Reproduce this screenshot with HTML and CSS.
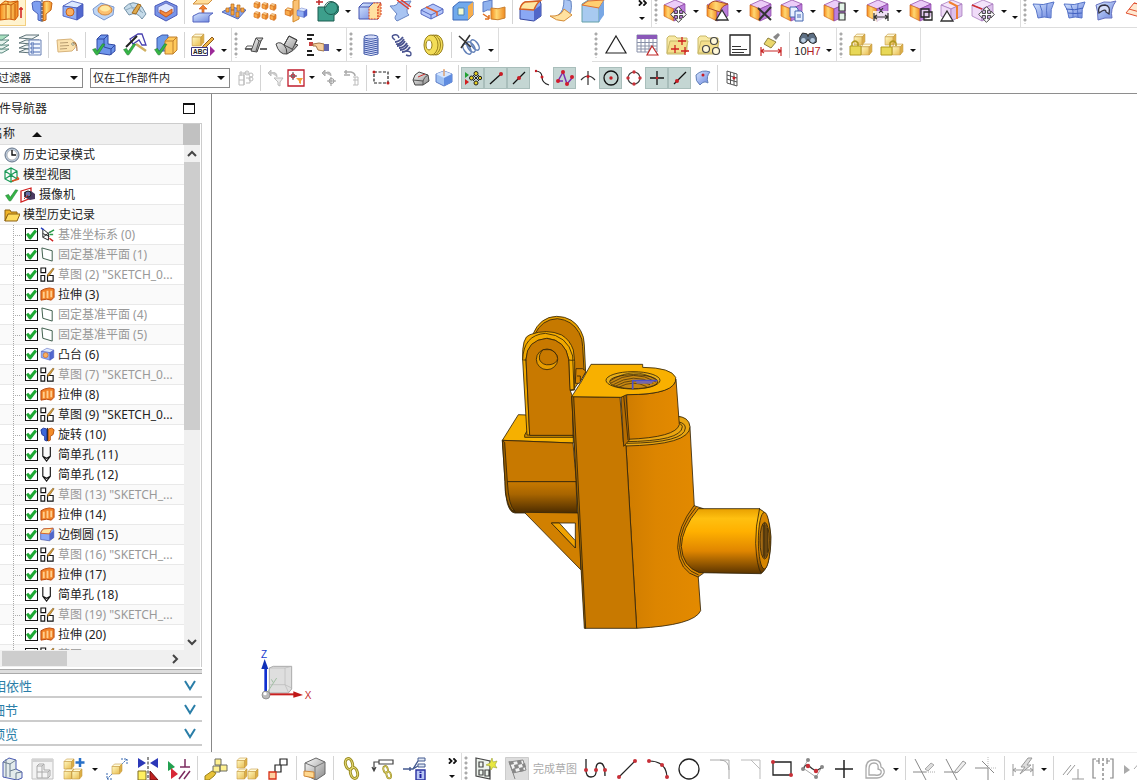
FILE: index.html
```html
<!DOCTYPE html>
<html lang="zh-CN">
<head>
<meta charset="utf-8">
<title>部件导航器</title>
<link rel="stylesheet" href="styles.css">
</head>
<body>
<svg class="sprite" aria-hidden="true">
<defs>
<linearGradient id="og" x2="1"><stop offset="0" stop-color="#f58a1c"/><stop offset=".4" stop-color="#ffd873"/><stop offset="1" stop-color="#f08a20"/></linearGradient>
<linearGradient id="bl" x2="1" y2="1"><stop offset="0" stop-color="#d8e8ff"/><stop offset="1" stop-color="#6680dc"/></linearGradient>
<linearGradient id="ye" x2="1" y2="1"><stop offset="0" stop-color="#fff8c0"/><stop offset="1" stop-color="#e8bc50"/></linearGradient>
<linearGradient id="gy" x2="1" y2="1"><stop offset="0" stop-color="#fff"/><stop offset="1" stop-color="#888"/></linearGradient>
<linearGradient id="mWall" x2="1"><stop offset="0" stop-color="#cf7c00"/><stop offset=".4" stop-color="#dc8500"/><stop offset="1" stop-color="#e38a00"/></linearGradient>
<linearGradient id="mPipe" x2="0" y2="1"><stop offset="0" stop-color="#e8a000"/><stop offset=".15" stop-color="#ffc010"/><stop offset=".35" stop-color="#ffb000"/><stop offset=".65" stop-color="#e08600"/><stop offset="1" stop-color="#5a3400"/></linearGradient>
<linearGradient id="mDark" x2="0" y2="1"><stop offset="0" stop-color="#c87900"/><stop offset=".4" stop-color="#a86500"/><stop offset="1" stop-color="#4c2c00"/></linearGradient>
</defs>
<symbol id="cubeB" viewBox="0 0 24 24"><g stroke="#4455b8" stroke-width=".8"><path d="M2 7l9-5 11 3-6 4z" fill="#dce9ff"/><path d="M2 7l14 2v12L2 17z" fill="#91aef4"/><path d="M16 9l6-4v12l-6 4z" fill="#5268cf"/></g></symbol>
<symbol id="cubeP" viewBox="0 0 24 24"><g stroke="#8a3fa0" stroke-width=".7"><path d="M1 6l11-5 10 4-11 5z" fill="#eccdf8"/><path d="M1 6l10 4v12L1 17z" fill="url(#og)" stroke="#d06a20"/><path d="M11 10l11-5v12l-11 5z" fill="#bb7fdc"/></g></symbol>
<symbol id="cubeL" viewBox="0 0 24 24"><g stroke="#a070b8" stroke-width=".7"><path d="M1 6l11-5 10 4-11 5z" fill="#f3e4fb"/><path d="M1 6l10 4v12L1 17z" fill="#f0dcf8"/><path d="M11 10l11-5v12l-11 5z" fill="#dcc0ec"/></g></symbol>
<symbol id="cubeY" viewBox="0 0 24 24"><g stroke="#c89c44" stroke-width="1.2" stroke-linejoin="round"><path d="M2 7l5-5h15l-5 5z" fill="#fffad8"/><path d="M2 7h15v15H2z" fill="url(#ye)"/><path d="M17 7l5-5v14l-5 6z" fill="#dcae44"/></g></symbol>
<symbol id="cubeO" viewBox="0 0 24 24"><g stroke="#d4701c" stroke-width="2" stroke-linejoin="round"><path d="M3 7l6-5 12 3-6 5z" fill="#ffe7a8"/><path d="M3 7l12 3v12L3 18z" fill="#f9ab4c"/><path d="M15 10l6-5v12l-6 5z" fill="#e98a30"/></g></symbol>
<symbol id="arrows" viewBox="0 0 24 24"><path d="M12 1l5 5h-3.500v4.500H18V7l5 5-5 5v-3.500h-4.500V18H17l-5 5-5-5h3.500v-4.500H6V17l-5-5 5-5v3.500h4.500V6H7z" fill="#fff" stroke="#333" stroke-width="1.300"/></symbol>
<symbol id="tick" viewBox="0 0 24 24"><path d="M1 13l5-2 3 5L18 3l4 1L10 22H7z" fill="#35b545" stroke="#1b7a2c"/></symbol>

<symbol id="extrude" viewBox="0 0 24 24"><path d="M1 6l5-4 5 1 8-1v15l-3 4-6-1-9 1z" fill="url(#og)" stroke="#d05a08"/><path d="M1 6l6-1 5 1 7-4M7 5v15M12 6v14M16 5v15M9 3v3" fill="none" stroke="#c45a08"/><path d="M22 19V8M20 10h4" stroke="#d02020" stroke-width="1.500"/></symbol>
<symbol id="revolve" viewBox="0 0 24 24"><path d="M11 3Q5 1 2 4l1 7 5 4v6l3 1z" fill="#7e9ff0" stroke="#4a62b8"/><path d="M13 3q6-2 9 1l-1 7-5 4v6l-3 1z" fill="url(#og)" stroke="#c86414"/><path d="M12 0v24" stroke="#303030" stroke-dasharray="3 1"/></symbol>
<symbol id="boss" viewBox="0 0 24 24"><use href="#cubeB"/><circle cx="9" cy="13" r="4" fill="#fbb060" stroke="#c8641c"/></symbol>
<symbol id="pad" viewBox="0 0 24 24"><path d="M1 10l8-6 13 4-1 8-9 5L2 15z" fill="#bfd6f4" stroke="#7a98d0"/><ellipse cx="13" cy="11" rx="7" ry="5" fill="#fbc070" stroke="#d58434"/><ellipse cx="13" cy="9.500" rx="5" ry="3" fill="#ffe9a0"/></symbol>
<symbol id="arcpad" viewBox="0 0 24 24"><path d="M1 9Q10-1 19 8l4 7-4 5q-5-8-13-4z" fill="#c6dbe9" stroke="#7492a8"/><path d="M7 5l6 9M14 4l4 9M3 11q9-6 17 3" fill="none" stroke="#8ca9bd"/><path d="M9 14l6-9 3 1-5 9z" fill="#e0ab4c" stroke="#a26a20"/></symbol>
<symbol id="shell" viewBox="0 0 24 24"><path d="M1 7l11-5 11 5v9l-11 6-11-6z" fill="#7895e8" stroke="#4a58b8"/><path d="M4 8l8-4 8 4v5l-8 5-8-5z" fill="#dfe8ff" stroke="#6a70c0"/><path d="M6 11l6 3 6-4v4l-6 4-6-4z" fill="#f58b3e" stroke="#c85a20"/></symbol>
<symbol id="offset" viewBox="0 0 24 24"><path d="M7 0h15l-5 5H2z" fill="#ffdc98" stroke="#d09040"/><path d="M12 6l4 4h-3v5h-2v-5H8z" fill="#f08030" stroke="#c85010" stroke-width=".6"/><path d="M2 17l6-3h14l-4 3v6H2z" fill="url(#bl)" stroke="#5465c0"/></symbol>
<symbol id="pattern" viewBox="0 0 24 24"><path d="M0 13l9-5 15 3-8 9z" fill="#86a5ee" stroke="#5468b8"/><g fill="#f7a843" stroke="#b86a1c" stroke-width=".7"><path d="M4 13V9h3v4zM9 11V5h3v6zM15 12V6h3v6zM9 16v-5h3v5zM14 18v-5h3v5zM19 13V9h3v4z"/></g></symbol>
<symbol id="cubes6" viewBox="0 0 24 24"><use href="#cubeO" x="0" y="2" width="8" height="8"/><use href="#cubeO" x="8" y="3" width="8" height="8"/><use href="#cubeO" x="16" y="4" width="8" height="8"/><use href="#cubeO" x="0" y="12" width="8" height="8"/><use href="#cubeO" x="8" y="13" width="8" height="8"/><use href="#cubeO" x="16" y="14" width="8" height="8"/></symbol>
<symbol id="mirror" viewBox="0 0 24 24"><path d="M9 2l6-2v20l-6 3z" fill="#fbc273" stroke="#d38a2c"/><use href="#cubeO" x="0" y="8" width="10" height="10"/><use href="#cubeB" x="12" y="8" width="12" height="12"/></symbol>
<symbol id="unite" viewBox="0 0 24 24"><path d="M4 0v6M1 3h7" stroke="#c02828" stroke-width="1.500"/><path d="M3 8h8a6.500 6.500 0 1 1 8 8v6H3z" fill="#3d9f8c" stroke="#1c5c50"/><circle cx="16" cy="9" r="6.500" fill="none" stroke="#1c5c50"/></symbol>
<symbol id="splitcube" viewBox="0 0 24 24"><path d="M1 8l4-4h18l-3 4v12H1z" fill="url(#bl)" stroke="#4455b0"/><path d="M11 8l4-4h8l-3 4v12h-9z" fill="#ffe0a0" stroke="#d84020" stroke-dasharray="2 1"/><path d="M20 8l3-4v12l-3 4z" fill="#f9b878" stroke="#d84020" stroke-dasharray="2 1"/><path d="M1 8h10l4-4" fill="none" stroke="#4455b0"/></symbol>
<symbol id="trim" viewBox="0 0 24 24"><path d="M1 7q8 0 8-4l13-1q-7 11-2 14l-12 6q-4-3 0-7z" fill="#a8c4f2" stroke="#6a86c4"/><path d="M8 1l12 9M11 0l11 8" stroke="#e04030" stroke-width="1.500"/></symbol>
<symbol id="slabs" viewBox="0 0 24 24"><path d="M1 11l12-6 10 5v4l-12 6L1 15z" fill="#b4c6fa" stroke="#5468c0"/><path d="M1 11l10 5 12-6M11 16v4" fill="none" stroke="#5468c0"/><path d="M6 8l11 5v4" fill="none" stroke="#e8602c" stroke-width="1.500"/></symbol>
<symbol id="ucut" viewBox="0 0 24 24"><path d="M2 8l6-5h14v13l-5 5H2z" fill="#70a9ec" stroke="#3c68b8"/><path d="M17 7l5-4v13l-5 5z" fill="#f6ad4c"/><path d="M7 16V9h6v7z" fill="#f3fbd0" stroke="#4d85b0"/></symbol>
<symbol id="wrapcopy" viewBox="0 0 24 24"><path d="M1 3l9-2v10q-5-1-9 2z" fill="#8fb2ee" stroke="#5878c4"/><path d="M9 9q7 2 14-1v11q-7 3-14 1z" fill="url(#og)" stroke="#c88030"/><path d="M1 15l6 4M7 20v-4m0 4H3" stroke="#e07020" stroke-width="1.500"/></symbol>
<symbol id="blend" viewBox="0 0 24 24"><path d="M1 10q1-5 5-7l15-1 1 3v12l-7 5-14-2z" fill="#8aa8f5" stroke="#3848a0"/><path d="M1 10q1-5 5-7l15-1q-4 3-6 9z" fill="#ffe6a0" stroke="#d96020" stroke-width="1.500"/><path d="M15 11l7-5v11l-7 5z" fill="#5066c8"/></symbol>
<symbol id="sweep" viewBox="0 0 24 24"><path d="M14 0l7 2q2 14-5 15l-8-1q6-3 6-16z" fill="#aac5f3" stroke="#6484c0"/><path d="M0 17q11 1 14-7l8 6-8 6q-8 0-14-5z" fill="#ffe1a0" stroke="#d48c38"/></symbol>
<symbol id="chamfer" viewBox="0 0 24 24"><path d="M1 5l8-5h14l-5 9v14H1z" fill="#a8caf0" stroke="#64a0a8"/><path d="M1 6l6-4 16-1-5 8z" fill="#ffcf70" stroke="#e07030"/><path d="M18 9l5-8v15l-5 7z" fill="#78a7e4"/></symbol>
<symbol id="fmove" viewBox="0 0 24 24"><use href="#cubeP"/><use href="#arrows" x="7" y="7" width="17" height="17"/></symbol>
<symbol id="fpull" viewBox="0 0 24 24"><use href="#cubeP"/><path d="M2 9q1-6 7-7l13 3q-7 2-8 8z" fill="url(#og)" stroke="#a84a30"/><path d="M16 11l6 10H10z" fill="#fff" stroke="#333" stroke-width="1.300"/></symbol>
<symbol id="fdel" viewBox="0 0 24 24"><use href="#cubeP"/><path d="M9 9l13 12M22 8L10 21" stroke="#333" stroke-width="2"/></symbol>
<symbol id="fcopy" viewBox="0 0 24 24"><use href="#cubeP"/><g fill="#e7f0ff" stroke="#4566b0"><path d="M10 8h6l2 2v8h-8z"/><path d="M15 12h6l2 2v8h-8zM17 16h4M17 18h4"/></g></symbol>
<symbol id="fgroup" viewBox="0 0 24 24"><use href="#cubeP"/><path d="M16 4h6v8h-6zM16 14h6v7h-6z" fill="#e4f4e8" stroke="#333" stroke-width="1.200"/></symbol>
<symbol id="fdim" viewBox="0 0 24 24"><use href="#cubeP"/><path d="M7 12h16v10H7z" fill="#fff" opacity=".75"/><path d="M8 14v8M22 14v8M8 18h14M11 16l-3 2 3 2M19 16l3 2-3 2M13 9l4 5M17 9l-4 5" fill="none" stroke="#333" stroke-width="1.200"/></symbol>
<symbol id="fframe" viewBox="0 0 24 24"><use href="#cubeP"/><path d="M12 10h8v8h-8zM15 13h8v8h-8z" fill="#fff" fill-opacity=".6" stroke="#222" stroke-width="1.300"/></symbol>
<symbol id="fshell" viewBox="0 0 24 24"><use href="#cubeL"/><path d="M9 3l8 4v13" fill="none" stroke="#f08030" stroke-width="2"/><path d="M7 12l6 10H1z" fill="#fff" stroke="#333" stroke-width="1.300"/></symbol>
<symbol id="fedge" viewBox="0 0 24 24"><use href="#cubeL"/><path d="M1 6l10 4" stroke="#d03030" stroke-width="1.500"/><use href="#arrows" x="7" y="7" width="17" height="17"/></symbol>
<symbol id="surf1" viewBox="0 0 24 24"><path d="M1 5q10 2 21-2-4 7-3 16-7-2-13 0Q5 10 1 5z" fill="url(#bl)" stroke="#5472c8"/><path d="M8 6q3 6 2 12M15 5q-1 6 0 13" fill="none" stroke="#5472c8"/></symbol>
<symbol id="surf2" viewBox="0 0 24 24"><use href="#surf1"/><path d="M3 10q9 2 17-1M5 14q7 1 14 0" fill="none" stroke="#4060c0"/></symbol>
<symbol id="surf3" viewBox="0 0 24 24"><path d="M2 6l8-3q7 1 12-1-6 8-4 17-7-1-14 2 0-9-2-15z" fill="url(#bl)" stroke="#6570c0"/><path d="M5 14q-2-8 6-8 6 1 4 9l-3-2q0-3-4-1z" fill="#d6defa" stroke="#334" stroke-width="1.300"/></symbol>
<symbol id="surf4" viewBox="0 0 24 24"><path d="M1 14l8-10 14 3-8 11z" fill="#ffe8d0" stroke="#e05030"/><path d="M4 10l14 4M9 4l8 2" stroke="#e05030"/></symbol>

<symbol id="layers" viewBox="0 0 24 24"><g fill="#e6f3ee" stroke="#5c8b80"><path d="M2 19l7-3h13l-7 4z"/><path d="M2 15l7-3h13l-7 4z"/><path d="M2 11l7-4h13l-7 5z"/><path d="M2 6l7-4h13l-7 5z" fill="#a8e0c0"/></g></symbol>
<symbol id="layerset" viewBox="0 0 24 24"><g fill="#f2f6f6" stroke="#5e7378"><path d="M1 19l7-3h13l-7 4z"/><path d="M1 15l7-3h13l-7 4z"/><path d="M1 10l7-3h13l-7 4z"/><path d="M1 5l7-3h13l-7 4z"/></g><path d="M11 7h12v15H11z" fill="#f2f7ff" stroke="#6880b4"/><path d="M13 10h3v2h-3zM13 14h3v2h-3zM13 18h3v2h-3zM17 11h5M17 15h5M17 19h5" stroke="#4868b0" fill="none"/></symbol>
<symbol id="tag" viewBox="0 0 24 24"><path d="M2 7l14-1 5 4-1 5-3 3-14 1z" fill="#fce2ae" stroke="#d8b47c"/><path d="M5 10l8-.5M5 13l9-.5M5 16l7-.5" stroke="#b89c70"/><circle cx="18" cy="11" r="1.300" fill="#fff" stroke="#997"/><path d="M18 10q4-2 4 8" fill="none" stroke="#a06838"/></symbol>
<symbol id="chkL" viewBox="0 0 24 24"><path d="M5 6l4-4h7v9l7 1v6l-5 4-13-2z" fill="#6d94ea" stroke="#3048a4"/><path d="M5 6h7v8l7 2 4-4M12 6l4-4M19 16v6" fill="none" stroke="#3048a4"/><use href="#tick" x="0" y="9" width="14" height="14"/></symbol>
<symbol id="chkT" viewBox="0 0 24 24"><path d="M7 6l8-5h4l4 11h-4l-3-5-6 4z" fill="#fff" stroke="#4840b0" stroke-width="1.300"/><path d="M3 14L14 3" stroke="#222" stroke-width="2"/><path d="M13 11l10 7" stroke="#d0b060" stroke-width="2.500"/><use href="#tick" x="0" y="9" width="14" height="14"/></symbol>
<symbol id="chkB" viewBox="0 0 24 24"><path d="M3 5l5-3h6v16H3z" fill="#6e9be8" stroke="#3c58ac"/><path d="M11 8l4-4h8v13l-4 4h-8z" fill="#ffc95c" stroke="#c0802c"/><path d="M11 8h8v13M19 8l4-4" fill="none" stroke="#c0802c"/><use href="#tick" x="0" y="9" width="14" height="14"/></symbol>
<symbol id="abc" viewBox="0 0 24 24"><use href="#cubeY" x="0" y="0" width="14" height="14"/><path d="M12 13l9-9 2 2-9 9-3 1z" fill="#f0b848" stroke="#8c5a20"/><path d="M.5 14.500h16v8H.5z" fill="#fff" stroke="#3b3580"/><text x="2" y="21" font-family="Liberation Sans, sans-serif" font-size="6.500" font-weight="700" fill="#222">ABC</text><path d="M19 13l5 5-5 5z" fill="#9c2a98"/></symbol>
<symbol id="weld1" viewBox="0 0 24 24"><path d="M1 16h7M16 16h7" stroke="#333" stroke-width="1.300"/><path d="M7 18l5-13h7l-2 3-4 11z" fill="url(#gy)" stroke="#444"/><path d="M12 5l3 3h2M15 8l-3 10M1 16l2-3h5" fill="none" stroke="#555"/></symbol>
<symbol id="weld2" viewBox="0 0 24 24"><path d="M1 11q3 11 11 10 7-3 11-9l-3-1 2-4-8-4-5 9-3-2q-3-1-5 1z" fill="url(#gy)" stroke="#444"/><path d="M9 12l5-9 8 4-5 10M9 12q3 3 3 9M9 12l8 4" fill="none" stroke="#444"/></symbol>
<symbol id="pick" viewBox="0 0 24 24"><path d="M1 2h7M1 6h5M1 18h5M1 22h7" stroke="#222" stroke-width="1.800"/><path d="M3 9h4v4H3z" fill="#c84040"/><path d="M7 11l6-1 5 1v7l-6-1-2-4H7z" fill="#f7cf9c" stroke="#a37648"/><path d="M18 11h5v7h-5z" fill="#6266ac"/></symbol>
<symbol id="coil" viewBox="0 0 24 24"><path d="M5 3h14v18H5z" fill="#d6defa"/><g fill="none" stroke="#4058a8"><ellipse cx="12" cy="4" rx="7" ry="2"/><path d="M5 5v16M19 5v16M5 7q7 3 14 0M5 9q7 3 14 0M5 11q7 3 14 0M5 13q7 3 14 0M5 15q7 3 14 0M5 17q7 3 14 0M5 19q7 3 14 0M5 21q7 3 14 0"/></g></symbol>
<symbol id="spring" viewBox="0 0 24 24"><g fill="none" stroke="#4a5490" stroke-width="1.400"><path d="M9 5Q8 1 4 2t1 5M16 18q5 0 5 3t-5 1"/><path d="M5 9q4 0 8-5M6 11q4 1 8-5M7 13q5 0 8-5M9 15q5 0 8-5M10 17q5 0 8-5M12 19q5 0 8-5" stroke-width="1.800"/></g></symbol>
<symbol id="rings" viewBox="0 0 24 24"><g stroke="#98801c" fill="#f3dd58"><ellipse cx="15" cy="12" rx="7" ry="10"/><ellipse cx="12.500" cy="12" rx="7" ry="10"/><ellipse cx="10" cy="12" rx="7" ry="10"/><ellipse cx="8" cy="12" rx="3" ry="5" fill="#fff"/></g></symbol>
<symbol id="cutspring" viewBox="0 0 24 24"><g fill="none" stroke="#6280b8" stroke-width="1.500"><ellipse cx="9" cy="16" rx="3" ry="6" transform="rotate(-35 9 16)"/><ellipse cx="13" cy="14" rx="3" ry="6" transform="rotate(-35 13 14)"/><ellipse cx="17" cy="12" rx="3" ry="6" transform="rotate(-35 17 12)"/></g><path d="M1 3l12 11M12 2L3 15" stroke="#333" stroke-width="1.600"/></symbol>
<symbol id="tri" viewBox="0 0 24 24"><path d="M12 3l10 17H2z" fill="none" stroke="#222" stroke-width="1.200"/></symbol>
<symbol id="table" viewBox="0 0 24 24"><path d="M2 2h20v17H2z" fill="#fff" stroke="#8890a8"/><path d="M2 2h20v4H2z" fill="#8a58b8"/><path d="M2 9.500h20M2 13h20M2 16h20M6 6v13M10 6v13M14 6v13M18 6v13" stroke="#8890a8"/><path d="M17 13l6 9H12z" fill="#fff" stroke="#c02828" stroke-width="1.200"/></symbol>
<symbol id="folder" viewBox="0 0 24 24"><path d="M1 5l2-2h6l2 2h10v13l-3 3H1z" fill="#f8e9a4" stroke="#c8b868"/><path d="M4 8h18l-3 12H1z" fill="#f4df8c" stroke="#c8b868"/></symbol>
<symbol id="folderplus" viewBox="0 0 24 24"><use href="#folder"/><path d="M16 4v8M12 8h8M9 12v8M5 16h8M19 14v8M15 18h8" stroke="#d02020" stroke-width="1.300"/></symbol>
<symbol id="folderrings" viewBox="0 0 24 24"><use href="#folder"/><g fill="#fff8d8" stroke="#444" stroke-width="1.200"><circle cx="17" cy="8" r="3.500"/><circle cx="9" cy="16" r="3.500"/><circle cx="19" cy="18" r="3.500"/></g></symbol>
<symbol id="note" viewBox="0 0 24 24"><path d="M2 2h20v20H2z" fill="#fff" stroke="#222" stroke-width="1.300"/><path d="M4 13.500h9M4 16.500h15M4 19.500h12" stroke="#333"/></symbol>
<symbol id="brush" viewBox="0 0 24 24"><path d="M14 4l5-4 2 2-4 5z" fill="#888"/><path d="M9 5l8 4-5 6-7-4z" fill="#ead76c" stroke="#8c8040"/><path d="M2 14v9M22 14v9M2 18h20M5 16l-3 2 3 2M19 16l3 2-3 2" fill="none" stroke="#c82828" stroke-width="1.200"/></symbol>
<symbol id="binoc" viewBox="0 0 24 14"><path d="M3 6l3-5 5 1 1 3 1-3 5-1 3 5v5q-3 3-7 0l-2-3-2 3q-4 3-7 0z" fill="#5d6f84" stroke="#222"/><circle cx="7" cy="9" r="2.500" fill="#b8cce0"/><circle cx="17" cy="9" r="2.500" fill="#b8cce0"/></symbol>
<symbol id="lock1" viewBox="0 0 24 24"><use href="#cubeY" x="4" y="0" width="13" height="13"/><use href="#cubeY" x="11" y="10" width="13" height="13"/><path d="M1 13h11v9H1z" fill="#e8d858" stroke="#b0981c"/><path d="M3 13v-3q3-4 6 0v3" fill="none" stroke="#b0981c" stroke-width="1.500"/></symbol>
<symbol id="lock2" viewBox="0 0 24 24"><use href="#cubeY" x="4" y="0" width="13" height="13"/><use href="#cubeY" x="11" y="10" width="13" height="13"/><path d="M1 14h11v8H1z" fill="#e8d858" stroke="#b0981c"/><path d="M10 14v-4q3-4 6 0v3" fill="none" stroke="#b0981c" stroke-width="1.500"/></symbol>

<symbol id="selbody" viewBox="0 0 18 18"><g fill="none" stroke="#bbb"><path d="M2 6h5v10H2zM2 11h5M7 4v12M4 2v5M2 4h9M9 9h4v5H9"/><circle cx="10" cy="4" r="2"/><circle cx="14" cy="6" r="2"/><circle cx="14" cy="10" r="2"/></g></symbol>
<symbol id="undo" viewBox="0 0 18 18"><path d="M2 4l3-3v6zM5 4q6-2 6 4" fill="#ccc" stroke="#bbb"/><path d="M8 9h9l-3 4v4l-2-1v-3z" fill="#eee" stroke="#bbb"/></symbol>
<symbol id="filter" viewBox="0 0 18 18"><path d="M1 1h16v16H1z" fill="#fff" stroke="#c01c2c" stroke-width="1.300"/><path d="M6 3v8M2 7h8" stroke="#444"/><circle cx="6" cy="7" r="2" fill="none" stroke="#c01c2c"/><path d="M9 9h7l-2 3v3l-2-1v-2z" fill="#f3a13c"/></symbol>
<symbol id="swap" viewBox="0 0 18 18"><path d="M2 4l3-3v6zM5 4q6-3 6 3" fill="#bbb" stroke="#aaa"/><path d="M11 8v9M7 12h9" stroke="#999"/><circle cx="11.500" cy="12" r="2.500" fill="none" stroke="#999"/></symbol>
<symbol id="swap2" viewBox="0 0 18 18"><path d="M1 3h7q4 1 4 4M1 6h6M3 1v4" fill="none" stroke="#aaa" stroke-width="1.500"/><path d="M10 8h5v8h-5M10 11h5M12 8v8" fill="none" stroke="#bbb"/></symbol>
<symbol id="rectsel" viewBox="0 0 18 18"><path d="M2 3h14v11H2z" fill="none" stroke="#222" stroke-width="1.200" stroke-dasharray="3 1.500"/><circle cx="2" cy="3" r="1.500" fill="#c02020"/><circle cx="16" cy="14" r="1.500" fill="#c02020"/></symbol>
<symbol id="rib" viewBox="0 0 18 18"><path d="M1 11q1-6 6-8l9 3 1 6-6 4H3z" fill="url(#gy)" stroke="#444"/><path d="M1 11l10 1q1-4 5-6M11 12v4" fill="none" stroke="#555"/><path d="M6 8l7-3" fill="none" stroke="#d03030"/></symbol>
<symbol id="bcube" viewBox="0 0 18 18"><path d="M1 5l8-3 8 3v8l-8 4-8-4z" fill="#9ec0f2" stroke="#5c7cc8"/><path d="M1 5l8 4 8-4-8-3z" fill="#d5e6ff"/><path d="M9 9l8-4v8l-8 4z" fill="#5f8ce0"/><path d="M9 0v7" stroke="#e08030"/></symbol>
<symbol id="snap" viewBox="0 0 18 18"><path d="M1 3l4 3-4 3z" fill="#1fa030"/><path d="M1 10l4 3-4 3z" fill="#d02020"/><g fill="#e8d020" stroke="#222"><circle cx="12" cy="4.500" r="2"/><circle cx="12" cy="14" r="2"/><circle cx="7.500" cy="9" r="2"/><circle cx="16" cy="9" r="1.700"/></g><path d="M9 6l6 6M15 6l-6 6" stroke="#222"/></symbol>
<symbol id="endpt" viewBox="0 0 18 18"><path d="M3 15L14 5" stroke="#111" stroke-width="1.300"/><circle cx="14" cy="5" r="2" fill="#c81c24"/></symbol>
<symbol id="midpt" viewBox="0 0 18 18"><path d="M3 15L15 3" stroke="#111" stroke-width="1.300"/><circle cx="9" cy="9" r="2" fill="#c81c24"/></symbol>
<symbol id="ctrlpt" viewBox="0 0 18 18"><path d="M2 2q7 0 7 6t7 8" fill="none" stroke="#222" stroke-width="1.200"/><circle cx="9" cy="8" r="1.500" fill="#c81c24"/><circle cx="3" cy="2" r="1.200" fill="#c81c24"/></symbol>
<symbol id="pole" viewBox="0 0 18 18"><path d="M2 12L7 3l4 12 5-6M2 12h5" fill="none" stroke="#7a30b0" stroke-width="1.500"/><g fill="#d01c2c"><circle cx="2" cy="12" r="2"/><circle cx="7" cy="3" r="2"/><circle cx="11" cy="15" r="2"/><circle cx="16" cy="8" r="2"/></g></symbol>
<symbol id="inter" viewBox="0 0 18 18"><path d="M9 2v14M2 11q7-8 14 0" fill="none" stroke="#333" stroke-width="1.200"/><circle cx="9" cy="7.500" r="1.500" fill="#c81c24"/></symbol>
<symbol id="center" viewBox="0 0 18 18"><circle cx="9" cy="9" r="7" fill="none" stroke="#111" stroke-width="1.300"/><circle cx="9" cy="9" r="1.700" fill="#c81c24"/></symbol>
<symbol id="quad" viewBox="0 0 18 18"><circle cx="9" cy="9" r="6" fill="none" stroke="#444" stroke-width="1.200"/><g fill="#c83038"><circle cx="9" cy="3" r="1.700"/><circle cx="9" cy="15" r="1.700"/><circle cx="3" cy="9" r="1.700"/><circle cx="15" cy="9" r="1.700"/></g></symbol>
<symbol id="existpt" viewBox="0 0 18 18"><path d="M9 2v14M2 9h14" stroke="#111" stroke-width="1.300"/><circle cx="9" cy="9" r="1.300" fill="#c81c24"/></symbol>
<symbol id="oncurve" viewBox="0 0 18 18"><path d="M3 15L15 3" stroke="#111" stroke-width="1.300"/><circle cx="6" cy="12" r="2" fill="#c81c24"/></symbol>
<symbol id="onface" viewBox="0 0 18 18"><path d="M2 6q6-6 14-3-4 4-2 11-4-3-8 2-5-4-4-10z" fill="url(#bl)" stroke="#6482b8"/><circle cx="9" cy="6" r="1.500" fill="#c81c24"/></symbol>
<symbol id="gridpt" viewBox="0 0 18 18"><path d="M4 2l10 3v12L4 14zM4 6l10 3M4 10l10 3M7.500 3v12M11 4v12" fill="none" stroke="#444" stroke-width=".9"/><circle cx="11" cy="9" r="1.500" fill="#c81c24"/></symbol>

<symbol id="clock" viewBox="0 0 16 16"><circle cx="8" cy="8" r="7" fill="#bccbdc" stroke="#667488"/><circle cx="8" cy="8" r="5" fill="#fff" stroke="#888" stroke-width=".5"/><path d="M8 3v5h4" fill="none" stroke="#111" stroke-width="1.400"/></symbol>
<symbol id="mview" viewBox="0 0 16 16"><path d="M1 4l6-3 6 3v8l-6 3-6-3zM1 4l6 4 6-4M7 1v14M1 12l6-4 6 4" fill="none" stroke="#1b9a58" stroke-width="1.200"/><path d="M8 14l7-2M13 10l2 2" stroke="#e05020" stroke-width="1.500"/></symbol>
<symbol id="camera" viewBox="0 0 16 16"><path d="M1 4l10-3v10L1 15z" fill="#fff" stroke="#d02020" stroke-width="1.300"/><path d="M4 5l7-1 4 3v5l-5 1-6-3z" fill="#4a3a60"/><circle cx="8" cy="7" r="3" fill="#6670a8" stroke="#222"/><path d="M4 12l4-4" stroke="#d03020"/></symbol>
<symbol id="openf" viewBox="0 0 16 16"><path d="M1 3h5l1 2h6v3H4l-3 6z" fill="#f0b428" stroke="#8c6010"/><path d="M4 7h12l-3 7H1z" fill="#ffdc60" stroke="#8c6010"/></symbol>
<symbol id="csys" viewBox="0 0 16 16"><path d="M3 2v9l6 3V7zM3 7l7 3M3 11l8-6" fill="none" stroke="#222"/><path d="M10 6l5-3M10 8h4" stroke="#2a9a48" stroke-width="1.500"/><path d="M10 12l4 3" stroke="#d02020" stroke-width="1.500"/><path d="M1 1l3 2" stroke="#2840c0" stroke-width="1.500"/></symbol>
<symbol id="plane" viewBox="0 0 16 16"><path d="M2 1l11 3v11L3 12z" fill="#fff" stroke="#365844"/></symbol>
<symbol id="sketch" viewBox="0 0 16 16"><path d="M1 1h5v5H1zM1 9h4v6H1zM8 9h6v6H8z" fill="#fff" stroke="#111" stroke-width="1.200"/><path d="M8 8l6-7 1 1-5 7-2 1z" fill="#e0a030" stroke="#66451c" stroke-width=".6"/></symbol>
<symbol id="hole" viewBox="0 0 16 16"><path d="M3 0v10l4 5 4-5V0M3 10l4 2 4-2" fill="none" stroke="#111" stroke-width="1.200"/></symbol>
<symbol id="texr" viewBox="0 0 16 16"><path d="M1 4l4-2 5-1 5 1v9l-3 3-5-1-6 1z" fill="#f08024" stroke="#b8440c"/><path d="M3 5h2v7H3zM7 4h2v8H7zM11 4h2v7h-2z" fill="#ffd090"/></symbol>
<symbol id="trev" viewBox="0 0 16 16"><path d="M7 2Q3 0 1 3l1 5 3 2v4l2 1z" fill="#3c68d8" stroke="#2038a0"/><path d="M9 2q4-2 6 1l-1 5-3 2v4l-2 1z" fill="#f48c28" stroke="#b85410"/><path d="M8 1v14" stroke="#222"/></symbol>

<symbol id="asm1" viewBox="0 0 24 24"><path d="M3 5l6-4 7 2v9l6 3v6l-5 2-14-3z" fill="#e4ecec" stroke="#4858b0"/><path d="M3 5l7 2 6-4M10 7v13M10 14l6-2M16 16l6-1M16 16v7M6 2v18" fill="none" stroke="#6d7f90"/></symbol>
<symbol id="asm2" viewBox="0 0 24 24"><path d="M1 2h21v20H1z" fill="#f3f3f3" stroke="#c0c0c0"/><path d="M1 2h21v3H1z" fill="#d4d4d4"/><path d="M6 9l2-2h5v6h6v6l-2 2H6zM6 9h5v12M11 15h6v6M6 15h5M11 9l2-2M17 15l2-2" fill="#f4f4f4" stroke="#aaa"/></symbol>
<symbol id="addc" viewBox="0 0 24 24"><use href="#cubeY" x="1" y="1" width="12" height="12"/><use href="#cubeY" x="1" y="11" width="12" height="12"/><use href="#cubeY" x="9" y="11" width="12" height="12"/><path d="M18 1v9M13.500 5.500h9" stroke="#2870c8" stroke-width="2.500"/></symbol>
<symbol id="movec" viewBox="0 0 24 24"><use href="#cubeY" x="6" y="6" width="12" height="12"/><path d="M16 2h6v6M22 2l-5 5M2 16v6h6M2 22l5-5" fill="none" stroke="#3868b0" stroke-dasharray="2 1"/></symbol>
<symbol id="mirrorc" viewBox="0 0 24 24"><path d="M2 1l8 5-8 5zM22 1l-8 5 8 5z" fill="#2c38b8"/><path d="M12 0v24" stroke="#222" stroke-dasharray="3 1.500"/><path d="M2 14h8v9H2z" fill="#fff060" stroke="#806c20"/><path d="M14 14l8 9h-8z" fill="#c02020" stroke="#701010"/></symbol>
<symbol id="constr" viewBox="0 0 24 24"><path d="M1 4l7 6-7 4z" fill="#22a050"/><path d="M4 11l7 6-7 5z" fill="#d82838"/><path d="M18 2v8M13 10h10M12 22l6-8M17 22l6-8" stroke="#7c2c60" stroke-width="1.500"/></symbol>
<symbol id="wrench" viewBox="0 0 24 24"><path d="M9 9h7v6H9zM11 2h6v6h-6zM16 8h7v6h-7z" fill="#fff190" stroke="#6c6c60"/><path d="M1 19l7-5 4 2-2 3-5 4H1z" fill="#e8c238" stroke="#98801c"/></symbol>
<symbol id="cubes3" viewBox="0 0 24 24"><use href="#cubeY" x="1" y="0" width="12" height="12"/><use href="#cubeY" x="1" y="11" width="12" height="12"/><use href="#cubeY" x="12" y="11" width="12" height="12"/></symbol>
<symbol id="seq" viewBox="0 0 24 24"><path d="M14 2h7v6h-7zM9 8h6v7H9z" fill="#fff" stroke="#222" stroke-width="1.200"/><path d="M3 15h7v7H3z" fill="#ffd0a0" stroke="#d83018" stroke-width="1.300"/></symbol>
<symbol id="graybox" viewBox="0 0 24 24"><path d="M2 6l11-5 9 4v12l-9 6-11-5z" fill="url(#gy)" stroke="#666"/><path d="M2 6l10 4 10-5M12 10v13" fill="none" stroke="#777"/><path d="M1 14l10 1v6l-10-2z" fill="#ffd890" stroke="#d08838"/></symbol>
<symbol id="chain" viewBox="0 0 24 24"><g fill="none" stroke="#9c8f24" stroke-width="3"><ellipse cx="9" cy="7" rx="3.500" ry="5.500" transform="rotate(-15 9 7)"/><ellipse cx="14" cy="16" rx="3.500" ry="5.500" transform="rotate(-15 14 16)"/></g><g fill="none" stroke="#e9dc78"><ellipse cx="9" cy="7" rx="3.500" ry="5.500" transform="rotate(-15 9 7)"/><ellipse cx="14" cy="16" rx="3.500" ry="5.500" transform="rotate(-15 14 16)"/></g></symbol>
<symbol id="chain2" viewBox="0 0 24 24"><path d="M8 3h14v4H8zM8 5H3v8M1 10l2 4 2-4" fill="none" stroke="#444" stroke-width="1.200"/><use href="#chain" x="9" y="8" width="15" height="15"/></symbol>
<symbol id="info" viewBox="0 0 24 24"><path d="M1 12h10l5-8M11 12l5-3M8 10v4" fill="none" stroke="#445a90" stroke-width="1.400"/><path d="M16 1h7v3h-7zM16 7h7v3h-7z" fill="#e0e8f4" stroke="#445a90"/><path d="M14 13h9v10h-9z" fill="#b8c6f4" stroke="#2830a0" stroke-width="1.400"/><path d="M18.500 17v4M18.500 14.500v1.500" stroke="#2020a0" stroke-width="2"/></symbol>
<symbol id="newsk" viewBox="0 0 24 24"><path d="M2 1l14 3v18L2 19zM5 5h4v5H5zM5 13h4v5H5zM11 13h4v6h-4z" fill="#eef4ee" stroke="#444" stroke-width="1.200"/><path d="M18 1l1 4 4-1-2 4 2 3-4-1-2 3-1-4-4-1 4-2z" fill="#e8e840" stroke="#98a030" stroke-width=".6"/></symbol>
<symbol id="flag" viewBox="0 0 24 24"><path d="M.5.5h23v23H.5z" fill="#ddd" stroke="#ccc"/><path d="M4 5l14-2 3 10-13 3z" fill="#f3f3f3" stroke="#888"/><path d="M4 5l4-1 1 3-4 1zM12 4l4-1 1 4-4 1zM9 8l4-1 1 4-4 1zM17 7l3-1 1 4-3 1zM7 12l3-1 1 4-3 1zM14 11l4-1 1 4-4 1z" fill="#888"/><path d="M4 4l6 18" stroke="#888"/></symbol>
<symbol id="profile" viewBox="0 0 24 24"><path d="M2 2v11q0 7 5 7 6 0 5-8 0-6 4-6 5 0 5 13" fill="none" stroke="#222" stroke-width="1.300"/><g fill="#c83038"><circle cx="2" cy="13" r="2"/><circle cx="12" cy="13" r="2"/><circle cx="21" cy="13" r="2"/></g></symbol>
<symbol id="line" viewBox="0 0 24 24"><path d="M4 20L20 4" stroke="#222" stroke-width="1.200"/><circle cx="4" cy="20" r="2" fill="#c83038"/><circle cx="20" cy="4" r="2" fill="#c83038"/></symbol>
<symbol id="arc" viewBox="0 0 24 24"><path d="M3 4q17 0 18 16" fill="none" stroke="#222" stroke-width="1.200"/><g fill="#c83038"><circle cx="3" cy="4" r="2"/><circle cx="16" cy="8" r="2"/><circle cx="21" cy="20" r="2"/></g></symbol>
<symbol id="circle" viewBox="0 0 24 24"><circle cx="12" cy="12" r="10" fill="none" stroke="#222" stroke-width="1.300"/></symbol>
<symbol id="fillet" viewBox="0 0 24 24"><path d="M2 3h19v19M12 3q9 0 9 10" fill="none" stroke="#aaa"/></symbol>
<symbol id="cham2" viewBox="0 0 24 24"><path d="M2 3h19v19M12 3l9 9" fill="none" stroke="#bbb"/></symbol>
<symbol id="rect" viewBox="0 0 24 24"><path d="M3 5h18v13H3z" fill="none" stroke="#222" stroke-width="1.300"/><circle cx="3" cy="5" r="2" fill="#c83038"/><circle cx="21" cy="18" r="2" fill="#c83038"/></symbol>
<symbol id="poly" viewBox="0 0 24 24"><path d="M7 3l-5 8 13 9 6-10" fill="none" stroke="#aaa"/><path d="M3 11q2-5 5-2t7 5l5-3" fill="none" stroke="#333" stroke-width="1.200"/><g fill="#888"><circle cx="7" cy="3" r="2"/><circle cx="2" cy="12" r="2"/><circle cx="21" cy="10" r="2"/><circle cx="15" cy="20" r="2"/></g><circle cx="7" cy="9" r="2.200" fill="#c83038"/><circle cx="15" cy="14" r="2.200" fill="#c83038"/></symbol>
<symbol id="plus" viewBox="0 0 24 24"><path d="M12 3v18M3 12h18" stroke="#222" stroke-width="1.500"/></symbol>
<symbol id="offc" viewBox="0 0 24 24"><path d="M3 21V11q0-8 8-8 7 0 7 7 4 2 3 6-2 5-7 5zM6 18v-6q0-6 5-6t4 6q4 1 3 4t-6 2z" fill="none" stroke="#aaa" stroke-width="1.300"/></symbol>
<symbol id="qtrim" viewBox="0 0 24 24"><path d="M3 2l11 21M1 15h13" stroke="#888"/><path d="M14 15h9" stroke="#aaa" stroke-dasharray="1 1"/><path d="M13 12l6-6 3 2-6 6z" fill="#ddd" stroke="#aaa"/></symbol>
<symbol id="qext" viewBox="0 0 24 24"><path d="M3 2l11 21M1 15h14" stroke="#888"/><path d="M12 14L20 4l3 2-8 9-3 1z" fill="#eee" stroke="#999"/></symbol>
<symbol id="corner" viewBox="0 0 24 24"><path d="M1 11h13v12M8 4l12 12" fill="none" stroke="#888"/><path d="M14 0v11h9" fill="none" stroke="#bbb" stroke-dasharray="1 1"/></symbol>
<symbol id="rapid" viewBox="0 0 24 24"><path d="M2 7v12M22 7v12M2 13h20M5 11l-3 2 3 2M19 11l3 2-3 2" fill="none" stroke="#999"/><path d="M17 1l-7 9h4l-5 7 11-9h-4l5-7z" fill="#ddd" stroke="#999"/></symbol>
<symbol id="geoc" viewBox="0 0 24 24"><path d="M3 18l8-10M7 18l8-10M18 12v10M12 22h12" stroke="#999" fill="none"/></symbol>
<symbol id="symc" viewBox="0 0 24 24"><path d="M5 2H2v19h3M19 2h3v19h-3M8 1v6M16 1v6M5 4h3M19 4h-3" fill="none" stroke="#888" stroke-width="1.200"/><path d="M12 1v22" stroke="#555" stroke-dasharray="3 2"/></symbol>
<symbol id="play" viewBox="0 0 24 24"><path d="M2 8l6 5-6 4z" fill="#aaa"/><path d="M12 12l8-9" stroke="#aaa"/></symbol>
</svg>

<header class="tools">
  <div class="row row-top">
    <div class="group lead-a">
      <button class="b on" aria-label="拉伸"><svg><use href="#extrude"/></svg></button><button class="b" aria-label="旋转"><svg><use href="#revolve"/></svg></button><button class="b" aria-label="凸台"><svg><use href="#boss"/></svg></button><button class="b" aria-label="垫块"><svg><use href="#pad"/></svg></button><button class="b" aria-label="凸起"><svg><use href="#arcpad"/></svg></button><button class="b" aria-label="抽壳"><svg><use href="#shell"/></svg></button><i class="sep"></i><button class="b" aria-label="偏置"><svg><use href="#offset"/></svg></button><button class="b" aria-label="阵列特征"><svg><use href="#pattern"/></svg></button><button class="b" aria-label="阵列几何"><svg><use href="#cubes6"/></svg></button><button class="b" aria-label="镜像"><svg><use href="#mirror"/></svg></button><button class="b" aria-label="合并"><svg><use href="#unite"/></svg></button><button class="dd" aria-label="更多合并"></button><button class="b" aria-label="拆分体"><svg><use href="#splitcube"/></svg></button><button class="b" aria-label="修剪片体"><svg><use href="#trim"/></svg></button><button class="b" aria-label="分割面"><svg><use href="#slabs"/></svg></button><button class="b" aria-label="修剪体"><svg><use href="#ucut"/></svg></button><button class="b" aria-label="包裹"><svg><use href="#wrapcopy"/></svg></button><i class="sep"></i><button class="b" aria-label="边倒圆"><svg><use href="#blend"/></svg></button><button class="b" aria-label="面倒圆"><svg><use href="#sweep"/></svg></button><button class="b" aria-label="倒斜角"><svg><use href="#chamfer"/></svg></button><button class="more" aria-label="更多"><svg viewBox="0 0 10 6"><path d="M1 0l3 3-3 3M6 0l3 3-3 3"/></svg></button>
    </div>
    <div class="group wide-b"><i class="grip"></i><button class="b" aria-label="移动面"><svg><use href="#fmove"/></svg></button><button class="dd" aria-label="更多移动"></button><button class="b" aria-label="拉出面"><svg><use href="#fpull"/></svg></button><button class="dd" aria-label="更多拉出"></button><button class="b" aria-label="删除面"><svg><use href="#fdel"/></svg></button><button class="b" aria-label="复制面"><svg><use href="#fcopy"/></svg></button><button class="dd" aria-label="更多复制"></button><button class="b" aria-label="面组"><svg><use href="#fgroup"/></svg></button><button class="dd" aria-label="更多面组"></button><button class="b" aria-label="线性尺寸"><svg><use href="#fdim"/></svg></button><button class="dd" aria-label="更多尺寸"></button><button class="b" aria-label="截面"><svg><use href="#fframe"/></svg></button><button class="b" aria-label="壳体"><svg><use href="#fshell"/></svg></button><button class="b" aria-label="移动边"><svg><use href="#fedge"/></svg></button><button class="dd" aria-label="更多边"></button><button class="dd low" aria-label="工具条选项"></button></div>
    <div class="group wide-b"><i class="grip"></i><button class="b" aria-label="直纹"><svg><use href="#surf1"/></svg></button><button class="b" aria-label="曲线网格"><svg><use href="#surf2"/></svg></button><button class="b" aria-label="N边曲面"><svg><use href="#surf3"/></svg></button><button class="b" aria-label="扫掠"><svg><use href="#surf4"/></svg></button></div>
  </div>

  <div class="row row-mid">
    <div class="group lead-b boxed"><button class="b" aria-label="图层"><svg><use href="#layers"/></svg></button><button class="b" aria-label="图层设置"><svg><use href="#layerset"/></svg></button><i class="sep"></i><button class="b" aria-label="属性"><svg><use href="#tag"/></svg></button><i class="sep"></i><button class="b" aria-label="检查几何体"><svg><use href="#chkL"/></svg></button><button class="b" aria-label="检查工具"><svg><use href="#chkT"/></svg></button><button class="b" aria-label="检查部件"><svg><use href="#chkB"/></svg></button><i class="sep"></i><button class="b" aria-label="编辑标注"><svg><use href="#abc"/></svg></button><button class="dd low" aria-label="更多标注"></button></div>
    <div class="group boxed"><i class="grip"></i><button class="b" aria-label="加强筋"><svg><use href="#weld1"/></svg></button><button class="b" aria-label="凹槽"><svg><use href="#weld2"/></svg></button><button class="b" aria-label="选择列表"><svg><use href="#pick"/></svg></button><button class="dd low" aria-label="更多列表"></button></div>
    <div class="group boxed"><i class="grip"></i><button class="b" aria-label="圆柱弹簧"><svg><use href="#coil"/></svg></button><button class="b" aria-label="拉伸弹簧"><svg><use href="#spring"/></svg></button><button class="b" aria-label="碟簧"><svg><use href="#rings"/></svg></button><i class="sep"></i><button class="b" aria-label="删除弹簧"><svg><use href="#cutspring"/></svg></button><button class="dd low" aria-label="更多弹簧"></button></div>
    <div class="group boxed apart"><i class="grip"></i><button class="b" aria-label="三角"><svg><use href="#tri"/></svg></button><button class="b" aria-label="表格"><svg><use href="#table"/></svg></button><button class="b" aria-label="点集"><svg><use href="#folderplus"/></svg></button><button class="b" aria-label="孔集"><svg><use href="#folderrings"/></svg></button><button class="b" aria-label="注释"><svg><use href="#note"/></svg></button><button class="b" aria-label="尺寸样式"><svg><use href="#brush"/></svg></button><i class="sep"></i><button class="b fit" aria-label="公差查询 10H7"><svg><use href="#binoc"/></svg><span>10<em>H7</em></span></button><button class="dd low" aria-label="更多公差"></button></div>
    <div class="group boxed"><i class="grip"></i><button class="b" aria-label="锁定组件"><svg><use href="#lock1"/></svg></button><button class="b" aria-label="解锁组件"><svg><use href="#lock2"/></svg></button><button class="dd low" aria-label="更多锁定"></button></div>
  </div>

  <div class="row row-sel">
    <span class="pick pick-a"><select aria-label="选择过滤器"><option>过滤器</option></select></span>
    <span class="pick pick-b"><select aria-label="选择范围"><option>仅在工作部件内</option></select></span>
    <button class="s" aria-label="选择体"><svg><use href="#selbody"/></svg></button><i class="sep"></i><button class="s" aria-label="重置过滤器"><svg><use href="#undo"/></svg></button><button class="s tight" aria-label="详细过滤"><svg><use href="#filter"/></svg></button><button class="dd" aria-label="更多过滤"></button><button class="s" aria-label="取消选择"><svg><use href="#swap"/></svg></button><button class="s" aria-label="恢复选择"><svg><use href="#swap2"/></svg></button><i class="sep"></i><button class="s" aria-label="矩形选择"><svg><use href="#rectsel"/></svg></button><button class="dd" aria-label="更多选择方式"></button><i class="sep"></i><button class="s" aria-label="隐藏边"><svg><use href="#rib"/></svg></button><button class="s" aria-label="着色体"><svg><use href="#bcube"/></svg></button><i class="sep"></i><button class="s down" aria-label="启用捕捉点"><svg><use href="#snap"/></svg></button><button class="s down" aria-label="端点"><svg><use href="#endpt"/></svg></button><button class="s down" aria-label="中点"><svg><use href="#midpt"/></svg></button><button class="s" aria-label="控制点"><svg><use href="#ctrlpt"/></svg></button><button class="s down" aria-label="极点"><svg><use href="#pole"/></svg></button><button class="s" aria-label="交点"><svg><use href="#inter"/></svg></button><button class="s down" aria-label="圆心"><svg><use href="#center"/></svg></button><button class="s" aria-label="象限点"><svg><use href="#quad"/></svg></button><button class="s down" aria-label="现有点"><svg><use href="#existpt"/></svg></button><button class="s down" aria-label="曲线上的点"><svg><use href="#oncurve"/></svg></button><button class="s" aria-label="面上的点"><svg><use href="#onface"/></svg></button><i class="sep"></i><button class="s" aria-label="栅格点"><svg><use href="#gridpt"/></svg></button>
  </div>
</header>

<main class="work">
  <aside class="nav">
    <div class="nav-title"><h1>件导航器</h1><button class="max" aria-label="最大化"></button></div>
    <div class="tree">
      <div class="tree-head"><span class="col">名称</span><i class="up"></i><i class="corner"></i></div>
      <div class="tree-body">
        <ul class="nodes">
          <li class="top"><svg><use href="#clock"/></svg><span>历史记录模式</span></li>
          <li class="top"><svg><use href="#mview"/></svg><span>模型视图</span></li>
          <li class="top"><svg class="ok"><use href="#tick"/></svg><svg><use href="#camera"/></svg><span>摄像机</span></li>
          <li class="top"><svg><use href="#openf"/></svg><span>模型历史记录</span></li>
          <li class="dim"><label><input type="checkbox" checked><svg><use href="#csys"/></svg>基准坐标系 (0)</label></li>
          <li class="dim"><label><input type="checkbox" checked><svg><use href="#plane"/></svg>固定基准平面 (1)</label></li>
          <li class="dim"><label><input type="checkbox" checked><svg><use href="#sketch"/></svg>草图 (2) "SKETCH_0...</label></li>
          <li><label><input type="checkbox" checked><svg><use href="#texr"/></svg>拉伸 (3)</label></li>
          <li class="dim"><label><input type="checkbox" checked><svg><use href="#plane"/></svg>固定基准平面 (4)</label></li>
          <li class="dim"><label><input type="checkbox" checked><svg><use href="#plane"/></svg>固定基准平面 (5)</label></li>
          <li><label><input type="checkbox" checked><svg><use href="#boss"/></svg>凸台 (6)</label></li>
          <li class="dim"><label><input type="checkbox" checked><svg><use href="#sketch"/></svg>草图 (7) "SKETCH_0...</label></li>
          <li><label><input type="checkbox" checked><svg><use href="#texr"/></svg>拉伸 (8)</label></li>
          <li><label><input type="checkbox" checked><svg><use href="#sketch"/></svg>草图 (9) "SKETCH_0...</label></li>
          <li><label><input type="checkbox" checked><svg><use href="#trev"/></svg>旋转 (10)</label></li>
          <li><label><input type="checkbox" checked><svg><use href="#hole"/></svg>简单孔 (11)</label></li>
          <li><label><input type="checkbox" checked><svg><use href="#hole"/></svg>简单孔 (12)</label></li>
          <li class="dim"><label><input type="checkbox" checked><svg><use href="#sketch"/></svg>草图 (13) "SKETCH_...</label></li>
          <li><label><input type="checkbox" checked><svg><use href="#texr"/></svg>拉伸 (14)</label></li>
          <li><label><input type="checkbox" checked><svg><use href="#blend"/></svg>边倒圆 (15)</label></li>
          <li class="dim"><label><input type="checkbox" checked><svg><use href="#sketch"/></svg>草图 (16) "SKETCH_...</label></li>
          <li><label><input type="checkbox" checked><svg><use href="#texr"/></svg>拉伸 (17)</label></li>
          <li><label><input type="checkbox" checked><svg><use href="#hole"/></svg>简单孔 (18)</label></li>
          <li class="dim"><label><input type="checkbox" checked><svg><use href="#sketch"/></svg>草图 (19) "SKETCH_...</label></li>
          <li><label><input type="checkbox" checked><svg><use href="#texr"/></svg>拉伸 (20)</label></li>
          <li class="dim"><label><input type="checkbox" checked><svg><use href="#sketch"/></svg>草图</label></li>
        </ul>
        <div class="vbar"><button class="vend" aria-label="向上滚动"><svg viewBox="0 0 10 10"><path d="M1 7l4-4 4 4"/></svg></button><div class="vthumb"></div><div class="vrest"></div><button class="vend" aria-label="向下滚动"><svg viewBox="0 0 10 10"><path d="M1 3l4 4 4-4"/></svg></button></div>
      </div>
      <div class="hbar"><div class="hthumb"></div><button class="hend" aria-label="向右滚动"><svg viewBox="0 0 10 10"><path d="M3 1l4 4-4 4"/></svg></button></div>
    </div>
    <div class="split"></div>
    <button class="fold"><span>相依性</span><svg viewBox="0 0 12 12"><path d="M1 1l5 8 5-8"/></svg></button>
    <button class="fold two"><span>细节</span><svg viewBox="0 0 12 12"><path d="M1 1l5 8 5-8"/></svg></button>
    <button class="fold two"><span>预览</span><svg viewBox="0 0 12 12"><path d="M1 1l5 8 5-8"/></svg></button>
  </aside>

  <section class="view" aria-label="图形窗口">
    <svg class="model" viewBox="0 0 900 1020" role="img" aria-label="泵体模型">
      <g stroke="#33240a" stroke-width="2.500" stroke-linejoin="round">
        <path d="M128 104Q150 50 200 49 250 50 272 92 283 110 283 135L287 218 250 270 140 130z" fill="#e8a000"/>
        <path d="M134 104Q155 58 202 56 246 60 267 98 278 116 278 140L282 210 250 240 160 150z" fill="#c67900"/>
        <path d="M258 206h20l10 8-20 36h-12z" fill="#d48400"/>
        <path d="M85 344l26 1 5 60h134v24L37 421z" fill="#f6b000"/>
        <path d="M37 421l212 8 10 116H45z" fill="#c87900"/>
        <path d="M45 545h213l4 94H75Q60 638 52 610 44 580 45 545z" fill="url(#mDark)"/>
        <path d="M37 421l8 124q0 60 20 85l10 4Q56 620 52 545l-8-118z" fill="#9c6000"/>
        <path d="M103 637l166 2 3 170z" fill="#d18000"/>
        <path d="M184 669h72v75z" fill="#fff"/><path d="M184 669l72 75v-22l-48-53z" fill="#efa200"/>
        <path d="M98 180Q95 110 120 104 170 85 215 105 240 120 250 150L254 185V270L238 272 118 180z" fill="#f7ad00"/>
        <path d="M104 405l8-14v-14l7 28h130v7H104z" fill="#c98800"/>
        <path d="M98 180Q100 105 166 100 233 106 248 168L252 268 239 270 236 178Q225 120 172 115 112 120 108 178L119 405H111z" fill="#f0a800"/>
        <path d="M108 178Q110 120 170 115 227 120 236 178L240 270 247 288 249 406H119z" fill="#c87900"/>
        <ellipse cx="171" cy="178" rx="32" ry="31" fill="#e89c00"/>
        <path d="M160 149Q145 162 149 180 158 197 180 194 200 191 203 175 199 155 180 149z" fill="#c87900"/>
        <path d="M236 180q14 2 16 0M261 228h10v15M100 180h9" fill="none"/>
        <path d="M565 349Q595 356 600 383L613 620 624 820 632 932Q613 976 440 985L408 438z" fill="url(#mWall)"/>
        <path d="M402 400L560 349Q597 350 600 380 600 435 403 438z" fill="#e9a510"/>
        <path d="M410 430Q585 428 586 384 586 370 567 366M402 425Q575 424 577 380 577 374 568 370" fill="none"/>
        <path d="M410 284Q548 285 558 238L568 374Q558 412 412 418z" fill="url(#mWall)"/>
        <path d="M245 290l145 2 10 134 8 12 32 547H285z" fill="#c87900"/>
        <path d="M245 290l6-1 36 696h-4z" fill="#a86a00"/>
        <path d="M393 291l15-7 10 136-17 19z" fill="#b66c00"/>
        <path d="M401 286l13 134" fill="none"/>
        <path d="M303 193h155v9Q544 203 557 232 564 284 410 284l-17 8-148-2q28-40 58-97z" fill="#f8b000"/>
        <ellipse cx="429" cy="241" rx="81" ry="26" fill="#e9b018"/>
        <ellipse cx="431" cy="245" rx="72" ry="21" fill="#c88810"/>
        <g fill="none" stroke-width="2"><path d="M360 243Q430 196 500 240M363 249Q430 205 498 246M370 254Q430 217 490 250M377 258Q430 228 480 254M386 262Q430 238 470 260"/></g>
        <path d="M428 268V242h74" fill="none" stroke="#4a50c8" stroke-width="5"/><path d="M438 243h54l-8 8h-44z" fill="#7867a8" stroke="none"/>
        <path d="M612 617Q563 680 563 743 567 815 624 831L640 820V626z" fill="#d98700"/>
        <path d="M625 626H807Q838 635 843 710 842 805 812 821L628 818Q578 800 574 740 575 686 625 626z" fill="url(#mPipe)"/>
        <path d="M618 622Q569 680 569 743 573 807 626 825" fill="none"/>
        <path d="M809 624Q796 680 797 730 800 800 814 821" fill="none"/>
        <ellipse cx="823" cy="722" rx="18" ry="85" fill="#d78600"/>
        <ellipse cx="824" cy="722" rx="14" ry="55" fill="#a46a14"/>
        <path d="M820 674v96M824 669v105M828 674v96M832 684v74" fill="none"/>
      </g>
    </svg>
    <svg class="triad" viewBox="765 495 180 180" role="img" aria-label="坐标轴">
      <path d="M808 564l12-5h55v68l-10 12h-57z" fill="#dedede" stroke="#aaa" stroke-width="3"/>
      <path d="M808 564h47l20-5M855 564v50l10 22M808 614h47l20 10" fill="none" stroke="#b8b8b8" stroke-width="2"/>
      <path d="M800 640l30-46M814 598l6 10" stroke="#a2bfa4" stroke-width="3"/>
      <path d="M797 635V560" stroke="#1030d0" stroke-width="8"/><path d="M794 537l11 30h-21z" fill="#1030b8"/>
      <path d="M808 643h75" stroke="#c82020" stroke-width="6"/><path d="M880 634l29 11-29 8z" fill="#c01818"/>
      <circle cx="798" cy="645" r="12" fill="#bbb" stroke="#777" stroke-width="2"/><circle cx="795" cy="641" r="5" fill="#fff"/>
      <text x="783" y="535" fill="#2040d0">Z</text><text x="914" y="657" fill="#c83030">X</text>
    </svg>
  </section>
</main>

<footer class="row row-foot">
  <div class="group lead-c"><button class="b" aria-label="装配"><svg><use href="#asm1"/></svg></button><button class="b" aria-label="装配窗口"><svg><use href="#asm2"/></svg></button><button class="b" aria-label="添加组件"><svg><use href="#addc"/></svg></button><button class="dd" aria-label="更多组件"></button><button class="b" aria-label="移动组件"><svg><use href="#movec"/></svg></button><button class="b" aria-label="镜像装配"><svg><use href="#mirrorc"/></svg></button><button class="b" aria-label="装配约束"><svg><use href="#constr"/></svg></button><i class="sep"></i><button class="b" aria-label="编辑组件"><svg><use href="#wrench"/></svg></button><button class="b" aria-label="爆炸图"><svg><use href="#cubes3"/></svg></button><button class="b" aria-label="装配序列"><svg><use href="#seq"/></svg></button><i class="sep"></i><button class="b" aria-label="产品接口"><svg><use href="#graybox"/></svg></button><i class="sep"></i><button class="b" aria-label="链接"><svg><use href="#chain"/></svg></button><button class="b" aria-label="部件间链接"><svg><use href="#chain2"/></svg></button><button class="b" aria-label="关系信息"><svg><use href="#info"/></svg></button><button class="more" aria-label="更多"><svg viewBox="0 0 10 6"><path d="M1 0l3 3-3 3M6 0l3 3-3 3"/></svg></button></div>
  <div class="group"><i class="grip"></i><button class="b" aria-label="草图"><svg><use href="#newsk"/></svg></button><button class="finish" disabled><svg><use href="#flag"/></svg>完成草图</button><button class="b" aria-label="轮廓"><svg><use href="#profile"/></svg></button><button class="b" aria-label="直线"><svg><use href="#line"/></svg></button><button class="b" aria-label="圆弧"><svg><use href="#arc"/></svg></button><button class="b" aria-label="圆"><svg><use href="#circle"/></svg></button><button class="b" aria-label="圆角"><svg><use href="#fillet"/></svg></button><button class="b" aria-label="倒斜角"><svg><use href="#cham2"/></svg></button><button class="b" aria-label="矩形"><svg><use href="#rect"/></svg></button><button class="b" aria-label="艺术样条"><svg><use href="#poly"/></svg></button><button class="b" aria-label="点"><svg><use href="#plus"/></svg></button><button class="b" aria-label="偏置曲线"><svg><use href="#offc"/></svg></button><button class="dd" aria-label="更多曲线"></button><i class="sep"></i><button class="b" aria-label="快速修剪"><svg><use href="#qtrim"/></svg></button><button class="b" aria-label="快速延伸"><svg><use href="#qext"/></svg></button><button class="b" aria-label="制作拐角"><svg><use href="#corner"/></svg></button><i class="sep"></i><button class="b" aria-label="快速尺寸"><svg><use href="#rapid"/></svg></button><button class="dd" aria-label="更多尺寸"></button><i class="sep"></i><button class="b" aria-label="几何约束"><svg><use href="#geoc"/></svg></button><button class="b" aria-label="设为对称"><svg><use href="#symc"/></svg></button><button class="b" aria-label="显示约束"><svg><use href="#play"/></svg></button></div>
</footer>
</body>
</html>
```
FILE: styles.css
```css
* { box-sizing: border-box; }

body {
  margin: 0;
  height: 100vh;
  display: flex;
  flex-direction: column;
  overflow: hidden;
  background: #fff;
  color: #222;
  font: 12px/20px "Noto Sans", "Noto Sans CJK SC", sans-serif;
}

button {
  margin: 0;
  padding: 0;
  border: 0;
  background: none;
  font: inherit;
  color: inherit;
}

.sprite { position: absolute; width: 0; height: 0; }

/* toolbars */
.tools { border-bottom: 1px solid #8e8e8e; flex: none; }
.row { display: flex; overflow: hidden; flex: none; }
.row-top { height: 28px; border-bottom: 1px solid #ddd; }
.row-mid { height: 34px; }
.row-sel { height: 31px; align-items: center; }
.row-foot { height: 28px; border-top: 1px solid #eee; }

.group { display: flex; align-items: center; flex: none; }
.row-top .group { padding-bottom: 5px; }
.row-foot .group { height: 32px; }
.wide-b { border-left: 1px solid #ddd; }
.lead-a { margin-left: -5px; width: 656px; }
.lead-b { margin-left: -17px; }
.lead-c { margin-left: -4px; width: 466px; border-right: 1px solid #ddd; }
.boxed { border-right: 1px solid #ddd; border-bottom: 1px solid #ddd; padding-right: 1px; }
.apart { margin-left: 93px; }

.grip {
  width: 8px;
  height: 26px;
  flex: none;
  background: radial-gradient(circle at 4px 2px, #aaa 1px, transparent 2px) 0 0 / 8px 5px repeat-y;
}
.wide-b .grip { width: 7px; }

.b {
  width: 31px;
  height: 32px;
  flex: none;
  display: flex;
  align-items: center;
  justify-content: center;
}
.b svg { width: 24px; height: 24px; flex: none; }
.on { background: #fff3cf; border: 1px solid #f3cf80; }
.row-top .on { height: 30px; }

.dd { width: 12px; height: 24px; flex: none; display: grid; place-items: center; }
.dd::before { content: ""; border: 3px solid transparent; border-top-color: #111; border-bottom: 0; }
.low { padding-top: 12px; }
.row-top .low { width: 10px; }
.row-sel .dd { width: 11px; }

.sep { width: 6px; height: 26px; flex: none; background: linear-gradient(#d4d4d4, #d4d4d4) 3px 0 / 1px 100% no-repeat; }

.more {
  margin-left: auto;
  margin-right: 3px;
  width: 12px;
  height: 22px;
  display: flex;
  flex-direction: column;
  align-items: center;
  justify-content: space-between;
}
.more svg { width: 9px; height: 6px; fill: none; stroke: #111; stroke-width: 2; }
.more::after { content: ""; border: 3px solid transparent; border-top-color: #111; border-bottom: 0; margin-bottom: 2px; }

.fit { flex-direction: column; }
.fit svg { width: 22px; height: 13px; }
.fit span { font: 11px/12px "Liberation Sans", sans-serif; color: #222; }
.fit em { font-style: normal; color: #b02020; }

.finish { width: 79px; height: 32px; flex: none; display: flex; align-items: center; gap: 4px; padding-left: 4px; color: #aaa; font-size: 11px; white-space: nowrap; }
.finish svg { width: 24px; height: 24px; flex: none; }

.s { width: 23px; height: 22px; flex: none; display: flex; align-items: center; justify-content: center; }
.s svg { width: 18px; height: 18px; }
.tight { width: 20px; }
.down { background: #c4d6d3; border: 1px solid #a9bebb; }

.pick { position: relative; display: block; height: 20px; flex: none; }
.pick::after { content: ""; position: absolute; right: 5px; top: 8px; border: 4px solid transparent; border-top-color: #111; border-bottom: 0; pointer-events: none; }
.pick select {
  appearance: none;
  width: 100%;
  height: 100%;
  margin: 0;
  padding: 0 16px 0 2px;
  border: 1px solid #8a8a8a;
  border-radius: 0;
  background: #fff;
  color: #222;
  font: 11px/18px "Noto Sans", "Noto Sans CJK SC", sans-serif;
}
.pick-a { width: 88px; margin-left: -5px; margin-right: 7px; }
.pick-b { width: 140px; margin-right: 4px; }

/* work area */
.work { flex: 1; min-height: 0; display: flex; }
.nav {
  width: 212px;
  flex: none;
  padding: 0 9px 6px 0;
  border-right: 1px solid #888;
  display: flex;
  flex-direction: column;
  overflow: hidden;
}
.nav-title { height: 29px; flex: none; display: flex; align-items: center; justify-content: space-between; padding-right: 7px; }
.nav-title h1 { margin: 0 0 0 -1px; font-size: 12px; line-height: 20px; font-weight: 400; }
.max { width: 12px; height: 11px; border: 1px solid #111; border-top-width: 2px; }

.tree { flex: 1; min-height: 0; display: flex; flex-direction: column; border: 1px solid #ccc; border-width: 1px 1px 0 0; padding-right: 1px; }
.tree-head { height: 21px; flex: none; display: flex; align-items: center; background: #f0f0f0; border-bottom: 1px solid #ddd; }
.col { margin-left: -9px; }
.up { margin-left: 17px; border: 5px solid transparent; border-bottom-color: #111; border-top: 0; }
.corner { margin-left: auto; width: 17px; height: 21px; background: #c1c1c1; }
.tree-body { flex: 1; min-height: 0; display: flex; }

.nodes { flex: 1; min-width: 0; margin: 0; padding: 0; list-style: none; overflow: hidden; }
.nodes li { height: 20px; display: flex; align-items: center; border-bottom: 1px solid #e9e9e9; white-space: nowrap; }
.nodes li:nth-child(even) { background: #fafafa; }
.nodes li:not(.top) {
  padding-left: 25px;
  background-image: repeating-linear-gradient(#aaa 0 1px, transparent 1px 2px), repeating-linear-gradient(90deg, #aaa 0 1px, transparent 1px 2px);
  background-size: 1px 100%, 8px 1px;
  background-position: 13px 0, 15px 10px;
  background-repeat: no-repeat;
}
.nodes .top { padding-left: 4px; gap: 3px; }
.nodes .top svg { width: 16px; height: 16px; flex: none; }
.nodes .top .ok { width: 14px; height: 14px; margin-left: 1px; }
.nodes .top svg + svg { margin-left: -2px; }
.nodes label { display: flex; align-items: center; }
.nodes label svg { width: 15px; height: 15px; margin: 0 3px 0 2px; flex: none; }
.dim { color: #999; }
.nodes input { appearance: none; width: 13px; height: 13px; margin: 0; border: 1px solid #111; background: #fff; flex: none; }
.nodes input::before { content: ""; display: block; width: 11px; height: 11px; background: #1faa35; clip-path: polygon(0 50%, 20% 34%, 38% 54%, 80% 5%, 100% 22%, 44% 96%, 28% 94%); }

.vbar { width: 16px; flex: none; display: flex; flex-direction: column; background: #f0f0f0; }
.vend, .hend { width: 16px; height: 17px; flex: none; display: grid; place-items: center; }
.vbar svg, .hbar svg { width: 10px; height: 10px; fill: none; stroke: #444; stroke-width: 2; }
.vthumb { flex: 268; background: #cdcdcd; }
.vrest { flex: 203; }
.hbar { height: 17px; flex: none; display: flex; align-items: center; justify-content: space-between; background: #f0f0f0; padding: 0 17px 0 2px; }
.hthumb { width: 65px; height: 15px; background: #cdcdcd; }

.split { height: 5px; margin-top: 2px; flex: none; background: #ddd; border: 1px solid #aaa; border-width: 1px 0; }
.fold {
  height: 24px;
  flex: none;
  display: flex;
  align-items: center;
  justify-content: space-between;
  padding-top: 2px;
  padding-right: 6px;
  border-bottom: 2px solid #ccc;
  color: #2a7ea8;
  font-size: 13px;
}
.fold span { margin-left: -7px; }
.two span { margin-left: -8px; }
.fold svg { width: 12px; height: 12px; fill: none; stroke: #2a7ea8; stroke-width: 2; }

.view { flex: 1; min-width: 0; position: relative; overflow: hidden; background: #fff; }
.model { position: absolute; left: 278px; top: 206px; width: 300px; height: 340px; }
.triad { position: absolute; left: 43px; top: 551px; width: 60px; height: 60px; }
.triad text { font: 30px "Liberation Sans", sans-serif; }
```
